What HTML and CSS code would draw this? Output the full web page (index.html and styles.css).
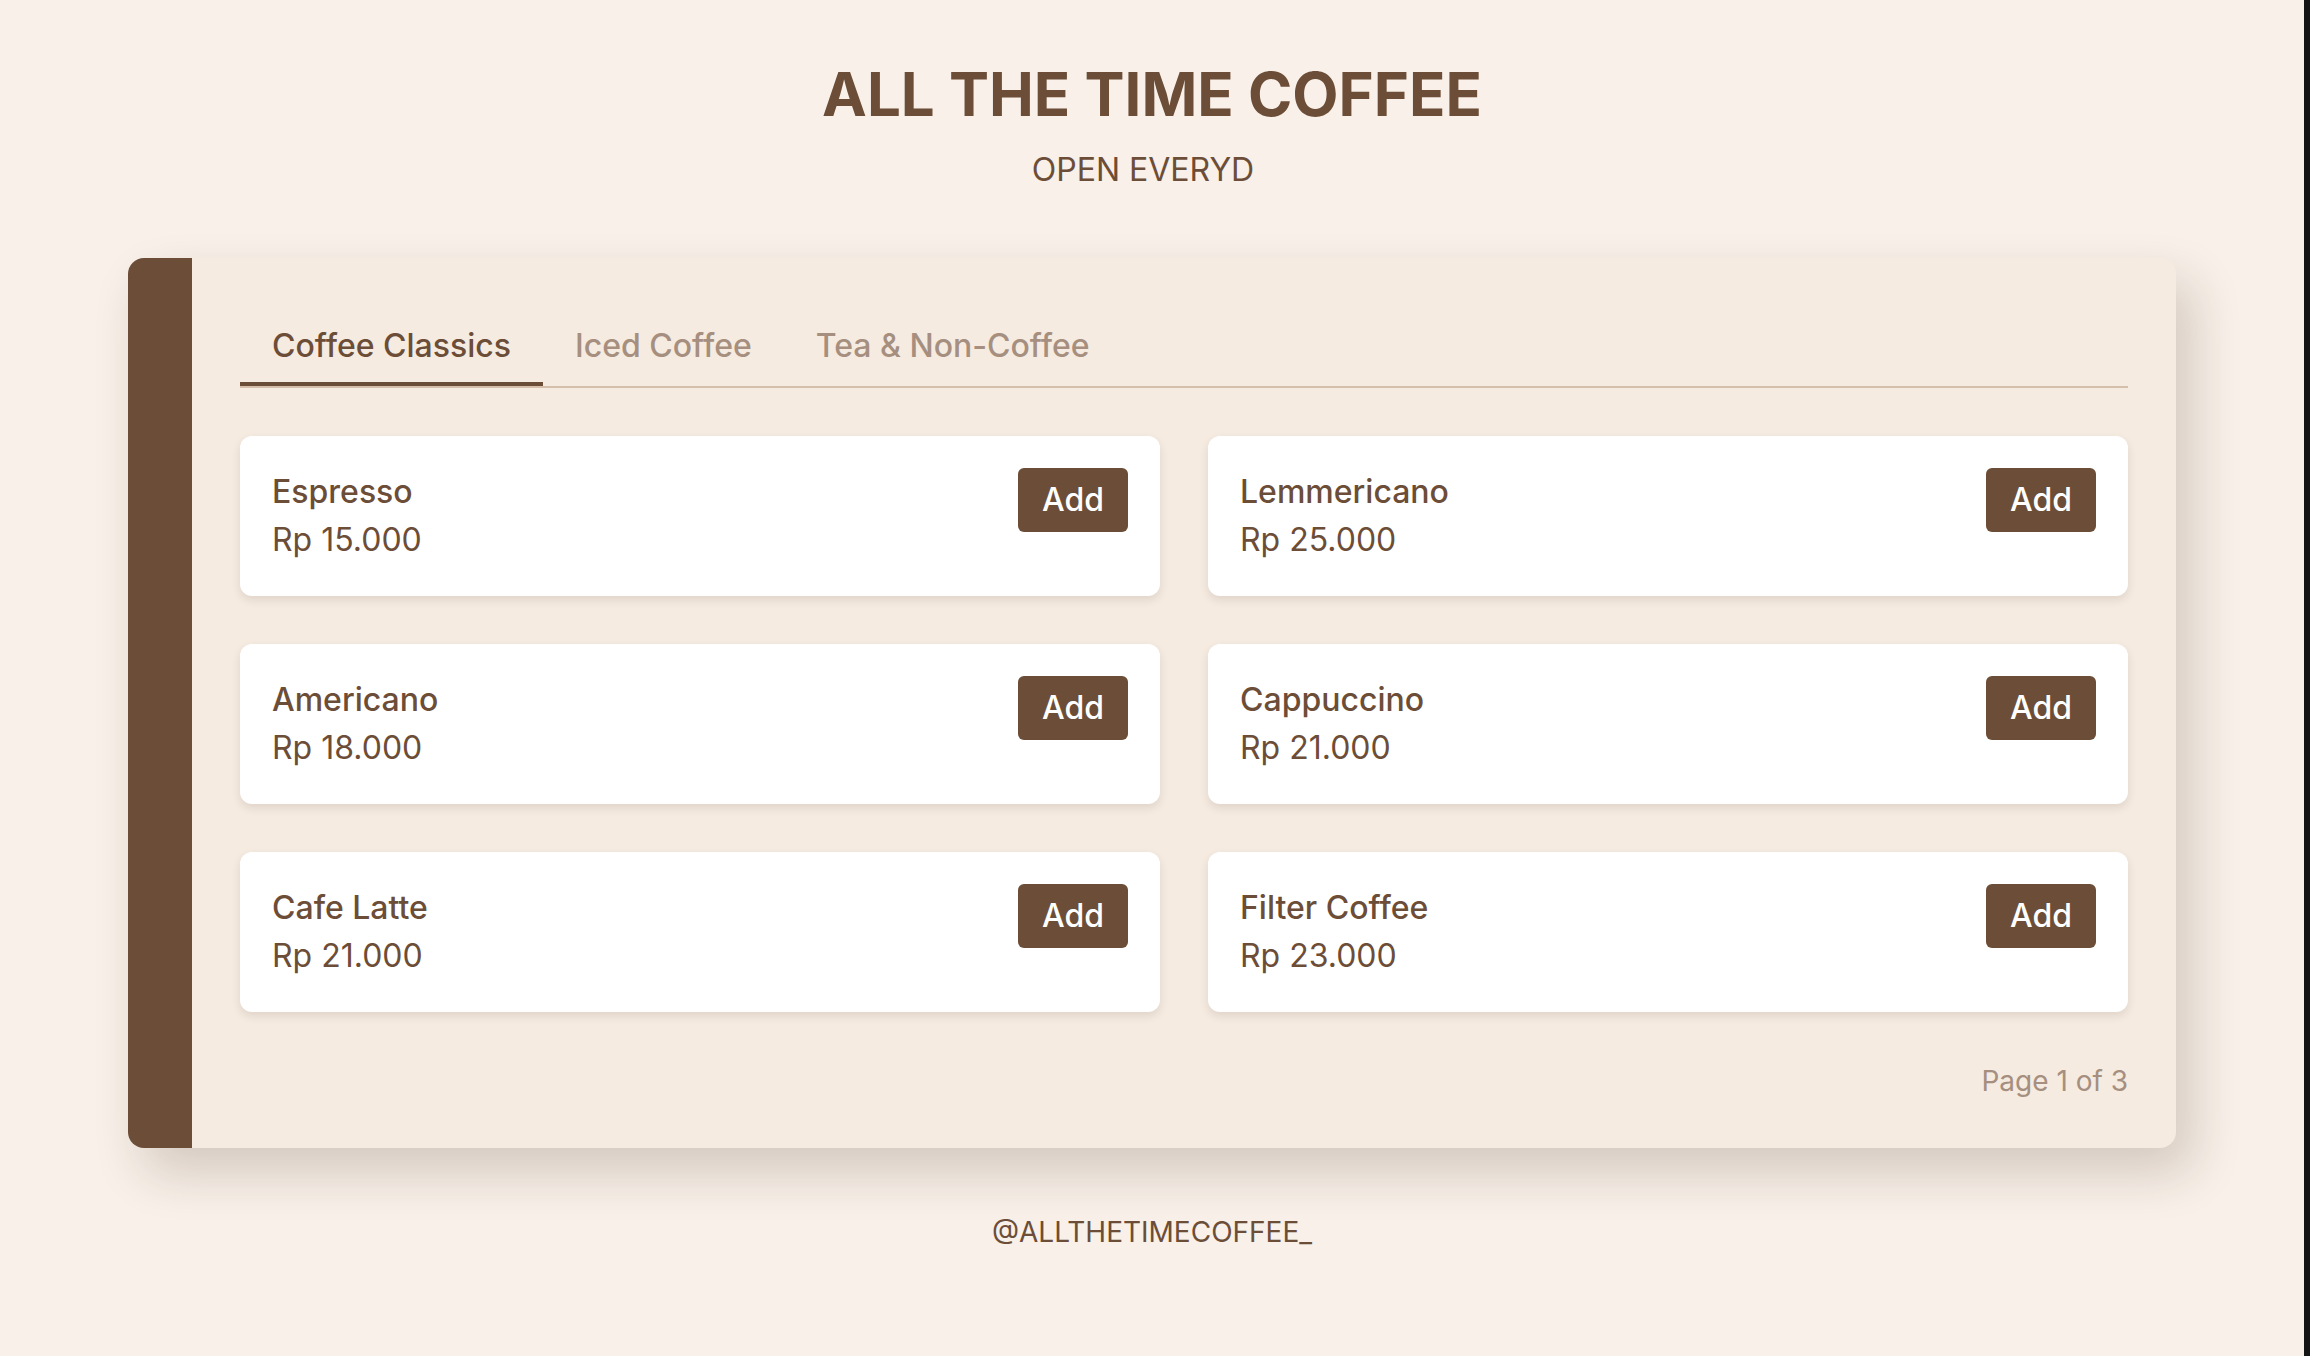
FILE: index.html
```html
<!DOCTYPE html>
<html lang="en">
<head>
<meta charset="utf-8">
<title>All The Time Coffee</title>
<link rel="stylesheet" href="styles.css">
</head>
<body>
  <header class="header">
    <h1 class="title">ALL THE TIME COFFEE</h1>
    <p class="subtitle">OPEN EVERYD</p>
  </header>

  <main class="menu-card">
    <div class="menu-accent"></div>
    <div class="menu-body">
      <nav class="tabs">
        <button class="tab active">Coffee Classics</button>
        <button class="tab">Iced Coffee</button>
        <button class="tab">Tea &amp; Non-Coffee</button>
      </nav>

      <div class="items">
        <div class="item">
          <div class="item-info">
            <div class="item-name">Espresso</div>
            <div class="item-price">Rp 15.000</div>
          </div>
          <button class="add-btn">Add</button>
        </div>
        <div class="item">
          <div class="item-info">
            <div class="item-name">Lemmericano</div>
            <div class="item-price">Rp 25.000</div>
          </div>
          <button class="add-btn">Add</button>
        </div>
        <div class="item">
          <div class="item-info">
            <div class="item-name">Americano</div>
            <div class="item-price">Rp 18.000</div>
          </div>
          <button class="add-btn">Add</button>
        </div>
        <div class="item">
          <div class="item-info">
            <div class="item-name">Cappuccino</div>
            <div class="item-price">Rp 21.000</div>
          </div>
          <button class="add-btn">Add</button>
        </div>
        <div class="item">
          <div class="item-info">
            <div class="item-name">Cafe Latte</div>
            <div class="item-price">Rp 21.000</div>
          </div>
          <button class="add-btn">Add</button>
        </div>
        <div class="item">
          <div class="item-info">
            <div class="item-name">Filter Coffee</div>
            <div class="item-price">Rp 23.000</div>
          </div>
          <button class="add-btn">Add</button>
        </div>
      </div>

      <div class="pager">Page 1 of 3</div>
    </div>
  </main>

  <footer class="footer">@ALLTHETIMECOFFEE_</footer>
</body>
</html>
```

FILE: styles.css
```css
html {
  background: #151515;
}

body {
  margin: 0 6px 0 0;
  min-height: 1356px;
  background: #f8f0e9;
  font-family: "Inter", "Noto Sans", "Liberation Sans", sans-serif;
  color: #6c4d37;
  display: flex;
  flex-direction: column;
  align-items: center;
}

.header {
  padding-top: 58px;
  text-align: center;
}

.title {
  margin: 0;
  font-size: 60px;
  line-height: 72px;
  font-weight: 700;
  color: #6c4d37;
}

.subtitle {
  margin: 16px 0 0;
  padding-right: 18px;
  font-size: 32px;
  line-height: 48px;
  font-weight: 400;
}

.menu-card {
  margin-top: 64px;
  width: 2048px;
  display: flex;
  background: #f5ebe1;
  border-radius: 16px;
  overflow: hidden;
  box-shadow: 16px 24px 50px rgba(70, 45, 25, 0.2);
}

.menu-accent {
  width: 64px;
  flex: none;
  background: #6c4d37;
}

.menu-body {
  flex: 1;
  padding: 48px 48px 46px;
}

.tabs {
  display: flex;
  border-bottom: 2px solid #d6bfaa;
}

.tab {
  font-family: inherit;
  font-size: 32px;
  line-height: 48px;
  font-weight: 500;
  color: #a68f7f;
  background: none;
  border: 0;
  border-bottom: 4px solid transparent;
  padding: 16px 32px 12px;
  margin: 0;
  cursor: pointer;
}

.tab.active {
  color: #6c4d37;
  border-bottom-color: #6c4d37;
}

.items {
  margin-top: 48px;
  display: grid;
  grid-template-columns: 1fr 1fr;
  gap: 48px;
}

.item {
  background: #ffffff;
  border-radius: 12px;
  padding: 32px;
  display: flex;
  justify-content: space-between;
  align-items: flex-start;
  box-shadow: 0 4px 8px rgba(80, 50, 30, 0.12);
}

.item-name {
  font-size: 32px;
  line-height: 48px;
  font-weight: 500;
}

.item-price {
  font-size: 32px;
  line-height: 48px;
  font-weight: 400;
}

.add-btn {
  font-family: inherit;
  font-size: 32px;
  line-height: 48px;
  font-weight: 500;
  color: #ffffff;
  background: #6c4d37;
  border: 0;
  border-radius: 6px;
  padding: 8px 24px;
  margin: 0;
  cursor: pointer;
}

.pager {
  margin-top: 48px;
  text-align: right;
  font-size: 28px;
  line-height: 42px;
  color: #a68f7f;
}

.footer {
  margin-top: 62px;
  font-size: 28px;
  line-height: 45px;
  color: #6c4d37;
}
```
